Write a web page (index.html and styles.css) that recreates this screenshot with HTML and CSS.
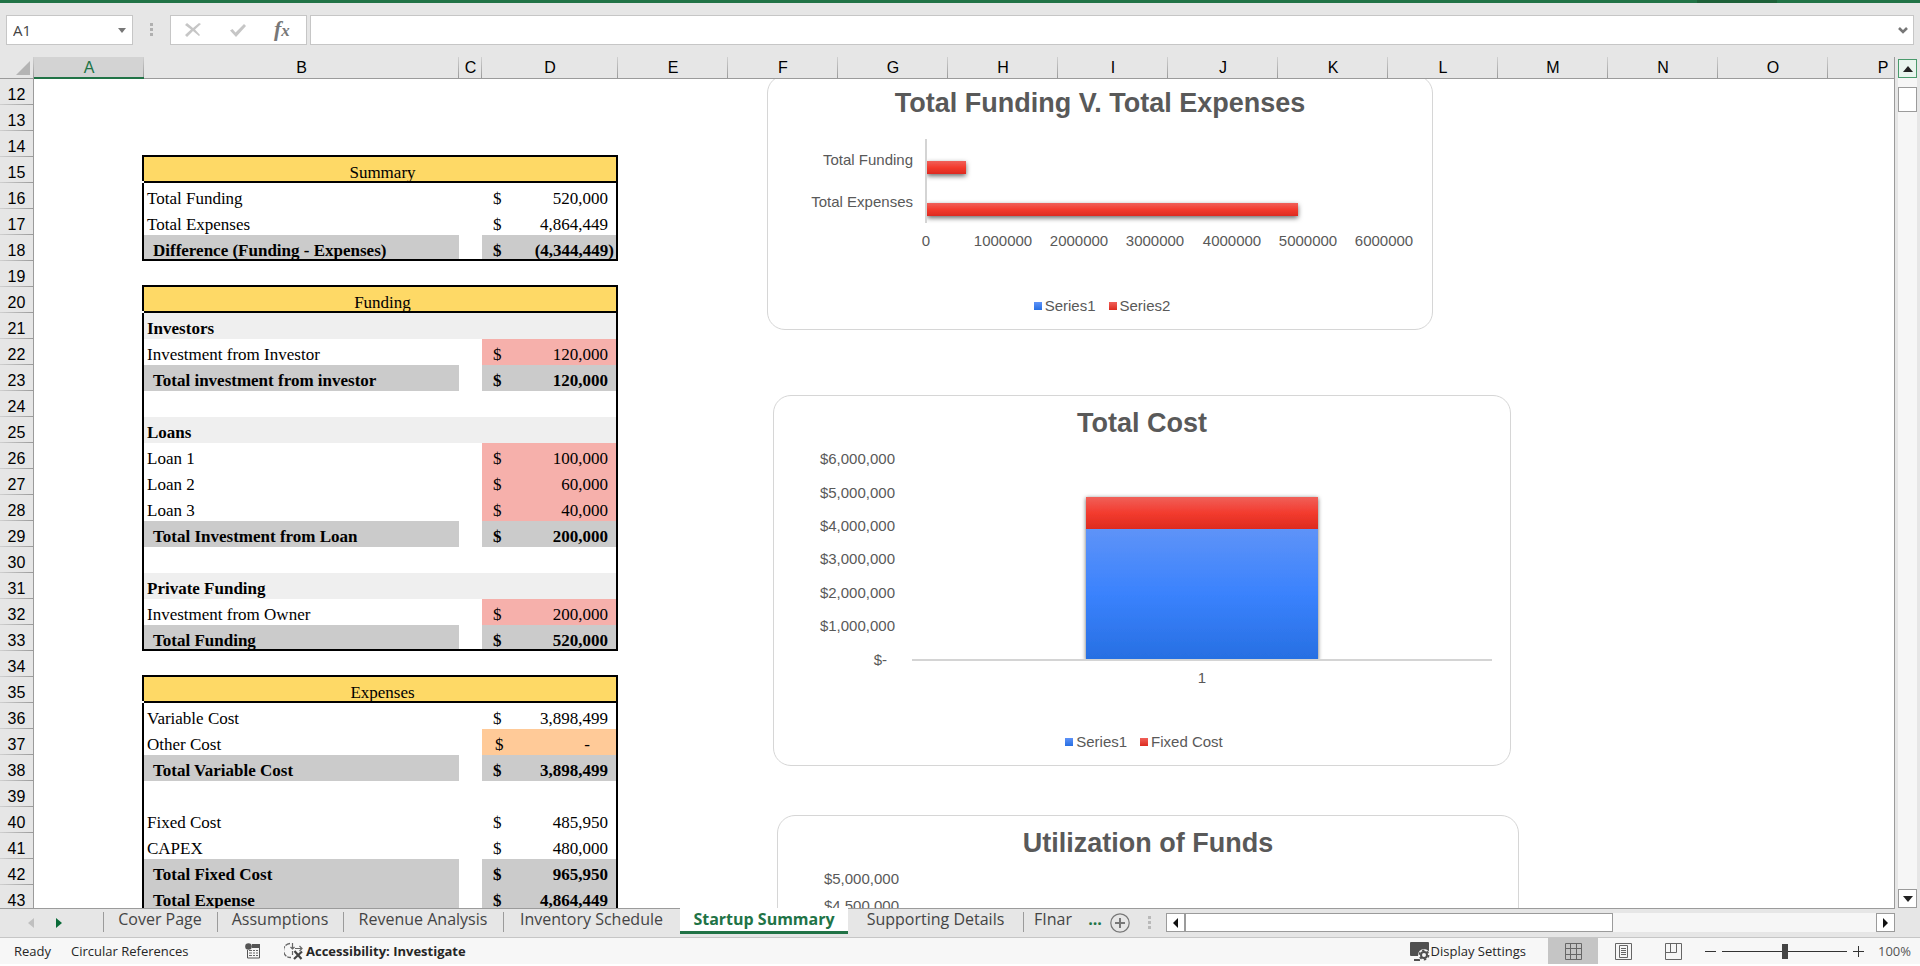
FILE: index.html
```html
<!DOCTYPE html>
<html lang="en">
<head>
<meta charset="utf-8">
<title>Startup Summary</title>
<link rel="stylesheet" href="styles.css">
</head>
<body>
<div class="ribbon-edge"><span class="ribbon-tab"></span></div>
<header class="formula-bar">
  <div class="name-box">
    <input class="name-input" type="text" value="A1" aria-label="Name box">
    <button class="name-arrow" aria-label="Open name list"><svg width="8" height="5" viewBox="0 0 8 5"><path d="M0 0h8L4 5z" fill="#777"/></svg></button>
  </div>
  <svg class="grip" width="4" height="14" viewBox="0 0 4 14"><path d="M0 0h3v3H0zM0 5h3v3H0zM0 10h3v3H0z" fill="#b0b0b0"/></svg>
  <div class="formula-tools">
    <button aria-label="Cancel"><svg width="18" height="16" viewBox="0 0 18 16"><path d="M1 3l2-2 6 5 6-5 2 1-6 5.500 5 5.500-1 1-6-5-6 6-2-2 6-5.500z" fill="#c6c6c6"/></svg></button>
    <button aria-label="Enter"><svg width="18" height="16" viewBox="0 0 18 16"><path d="M1 8.500L3.500 7l3 3.500L15 2l2 2L7 15z" fill="#c6c6c6"/></svg></button>
    <button class="fx" aria-label="Insert function"><span class="fx-f">f</span><span class="fx-x">x</span></button>
  </div>
  <div class="formula-box">
    <input class="formula-input" type="text" aria-label="Formula">
    <button class="formula-arrow" aria-label="Expand formula bar"><svg width="10" height="7" viewBox="0 0 10 7"><path d="M1 1l4 4 4-4" stroke="#777" stroke-width="2.6" fill="none"/></svg></button>
  </div>
</header>

<main class="workspace">
  <div class="sheet">
    <table class="grid">
      <colgroup><col class="c-num"><col class="c-a"><col class="c-b"><col class="c-c"><col class="c-d"><col span="12" class="c-std"></colgroup>
      <thead>
        <tr><th class="corner"><svg width="14" height="14" viewBox="0 0 14 14"><path d="M14 0v14H0z" fill="#b4b4b4"/></svg></th><th class="selected">A</th><th>B</th><th>C</th><th>D</th><th>E</th><th>F</th><th>G</th><th>H</th><th>I</th><th>J</th><th>K</th><th>L</th><th>M</th><th>N</th><th>O</th><th>P</th></tr>
      </thead>
      <tbody>
        <tr><th>12</th><td colspan="16"></td></tr>
        <tr><th>13</th><td colspan="16"></td></tr>
        <tr><th>14</th><td colspan="16"></td></tr>
        <tr class="title"><th>15</th><td></td><td class="head" colspan="3">Summary</td></tr>
        <tr class="line"><th>16</th><td></td><td>Total Funding</td><td></td><td><div class="money"><span>$</span><span>520,000</span></div></td></tr>
        <tr class="line"><th>17</th><td></td><td>Total Expenses</td><td></td><td><div class="money"><span>$</span><span>4,864,449</span></div></td></tr>
        <tr class="line total last"><th>18</th><td></td><td>Difference (Funding - Expenses)</td><td></td><td><div class="money negative"><span>$</span><span>(4,344,449)</span></div></td></tr>
        <tr><th>19</th><td colspan="16"></td></tr>
        <tr class="title"><th>20</th><td></td><td class="head" colspan="3">Funding</td></tr>
        <tr class="line section"><th>21</th><td></td><td>Investors</td><td></td><td></td></tr>
        <tr class="line input"><th>22</th><td></td><td>Investment from Investor</td><td></td><td><div class="money"><span>$</span><span>120,000</span></div></td></tr>
        <tr class="line total"><th>23</th><td></td><td>Total investment from investor</td><td></td><td><div class="money"><span>$</span><span>120,000</span></div></td></tr>
        <tr class="line"><th>24</th><td></td><td></td><td></td><td></td></tr>
        <tr class="line section"><th>25</th><td></td><td>Loans</td><td></td><td></td></tr>
        <tr class="line input"><th>26</th><td></td><td>Loan 1</td><td></td><td><div class="money"><span>$</span><span>100,000</span></div></td></tr>
        <tr class="line input"><th>27</th><td></td><td>Loan 2</td><td></td><td><div class="money"><span>$</span><span>60,000</span></div></td></tr>
        <tr class="line input"><th>28</th><td></td><td>Loan 3</td><td></td><td><div class="money"><span>$</span><span>40,000</span></div></td></tr>
        <tr class="line total"><th>29</th><td></td><td>Total Investment from Loan</td><td></td><td><div class="money"><span>$</span><span>200,000</span></div></td></tr>
        <tr class="line"><th>30</th><td></td><td></td><td></td><td></td></tr>
        <tr class="line section"><th>31</th><td></td><td>Private Funding</td><td></td><td></td></tr>
        <tr class="line input"><th>32</th><td></td><td>Investment from Owner</td><td></td><td><div class="money"><span>$</span><span>200,000</span></div></td></tr>
        <tr class="line total last"><th>33</th><td></td><td>Total Funding</td><td></td><td><div class="money"><span>$</span><span>520,000</span></div></td></tr>
        <tr><th>34</th><td colspan="16"></td></tr>
        <tr class="title"><th>35</th><td></td><td class="head" colspan="3">Expenses</td></tr>
        <tr class="line"><th>36</th><td></td><td>Variable Cost</td><td></td><td><div class="money"><span>$</span><span>3,898,499</span></div></td></tr>
        <tr class="line other"><th>37</th><td></td><td>Other Cost</td><td></td><td><div class="money dash"><span>$</span><span>-</span></div></td></tr>
        <tr class="line total"><th>38</th><td></td><td>Total Variable Cost</td><td></td><td><div class="money"><span>$</span><span>3,898,499</span></div></td></tr>
        <tr class="line"><th>39</th><td></td><td></td><td></td><td></td></tr>
        <tr class="line"><th>40</th><td></td><td>Fixed Cost</td><td></td><td><div class="money"><span>$</span><span>485,950</span></div></td></tr>
        <tr class="line"><th>41</th><td></td><td>CAPEX</td><td></td><td><div class="money"><span>$</span><span>480,000</span></div></td></tr>
        <tr class="line total"><th>42</th><td></td><td>Total Fixed Cost</td><td></td><td><div class="money"><span>$</span><span>965,950</span></div></td></tr>
        <tr class="line total"><th>43</th><td></td><td>Total Expense</td><td></td><td><div class="money"><span>$</span><span>4,864,449</span></div></td></tr>
      </tbody>
    </table>

    <div class="charts">
      <svg width="0" height="0" class="defs" aria-hidden="true">
        <defs>
          <linearGradient id="red" x1="0" y1="0" x2="0" y2="1"><stop offset="0" stop-color="#f06059"/><stop offset=".5" stop-color="#f33b2e"/><stop offset="1" stop-color="#dd2b1f"/></linearGradient>
          <linearGradient id="blue" x1="0" y1="0" x2="0" y2="1"><stop offset="0" stop-color="#5e93f8"/><stop offset=".5" stop-color="#3a82fd"/><stop offset="1" stop-color="#276fe2"/></linearGradient>
          <filter id="shadow" x="-20%" y="-60%" width="140%" height="260%"><feDropShadow dx="0" dy="2" stdDeviation="2.5" flood-color="#000" flood-opacity=".6"/></filter>
          <filter id="shadow-wide" x="-10%" y="-10%" width="120%" height="120%"><feDropShadow dx="0" dy="1" stdDeviation="2" flood-color="#000" flood-opacity=".6"/></filter>
          <clipPath id="right-of-axis"><rect x="159" y="0" width="500" height="177"/></clipPath>
          <clipPath id="above-axis"><rect x="0" y="0" width="736" height="220"/></clipPath>
        </defs>
      </svg>
      <figure class="chart chart-compare">
        <h2>Total Funding V. Total Expenses</h2>
        <svg class="plot" width="664" height="177" viewBox="0 0 664 177">
          <g clip-path="url(#right-of-axis)">
            <rect x="159" y="42" width="39" height="13" fill="url(#red)" filter="url(#shadow)"/>
            <rect x="159" y="84" width="371" height="13" fill="url(#red)" filter="url(#shadow)"/>
          </g>
          <path d="M158 20v84" stroke="#d4d4d4" stroke-width="2"/>
          <g text-anchor="end"><text x="145" y="46">Total Funding</text><text x="145" y="88">Total Expenses</text></g>
          <g text-anchor="middle"><text x="158" y="127">0</text><text x="235" y="127">1000000</text><text x="311" y="127">2000000</text><text x="387" y="127">3000000</text><text x="464" y="127">4000000</text><text x="540" y="127">5000000</text><text x="616" y="127">6000000</text></g>
        </svg>
        <ul class="legend"><li><i class="key blue"></i>Series1</li><li><i class="key red"></i>Series2</li></ul>
      </figure>
      <figure class="chart chart-cost">
        <h2>Total Cost</h2>
        <svg class="plot" width="736" height="293" viewBox="0 0 736 293">
          <g clip-path="url(#above-axis)"><g filter="url(#shadow-wide)">
            <rect x="312" y="58" width="232" height="32" fill="url(#red)"/>
            <rect x="312" y="90" width="232" height="131" fill="url(#blue)"/>
          </g></g>
          <path d="M138 221h580" stroke="#d4d4d4" stroke-width="2"/>
          <g text-anchor="end"><text x="121" y="25">$6,000,000</text><text x="121" y="59">$5,000,000</text><text x="121" y="92">$4,000,000</text><text x="121" y="125">$3,000,000</text><text x="121" y="159">$2,000,000</text><text x="121" y="192">$1,000,000</text><text x="113" y="226">$-</text></g>
          <text x="428" y="244" text-anchor="middle">1</text>
        </svg>
        <ul class="legend"><li><i class="key blue"></i>Series1</li><li><i class="key red"></i>Fixed Cost</li></ul>
      </figure>
      <figure class="chart chart-funds">
        <h2>Utilization of Funds</h2>
        <svg class="plot" width="740" height="293" viewBox="0 0 740 293">
          <g text-anchor="end"><text x="121" y="25">$5,000,000</text><text x="121" y="52">$4,500,000</text></g>
        </svg>
      </figure>
    </div>
  </div>
  <div class="vscroll">
    <button class="scroll-btn hot" aria-label="Scroll up"><svg width="10" height="6" viewBox="0 0 10 6"><path d="M0 6h10L5 0z" fill="#222"/></svg></button>
    <div class="vtrack"><div class="vthumb"></div></div>
    <button class="scroll-btn" aria-label="Scroll down"><svg width="10" height="6" viewBox="0 0 10 6"><path d="M0 0h10L5 6z" fill="#222"/></svg></button>
  </div>
</main>

<nav class="tab-bar">
  <div class="tab-nav">
    <button aria-label="Previous sheet"><svg width="6" height="10" viewBox="0 0 6 10"><path d="M6 0v10L0 5z" fill="#c0c0c0"/></svg></button>
    <button aria-label="Next sheet"><svg width="6" height="10" viewBox="0 0 6 10"><path d="M0 0v10l6-5z" fill="#0a6b38"/></svg></button>
  </div>
  <div class="tabs">
    <button class="tab t1">Cover Page</button>
    <button class="tab t2">Assumptions</button>
    <button class="tab t3">Revenue Analysis</button>
    <button class="tab t4">Inventory Schedule</button>
    <button class="tab t5 active">Startup Summary</button>
    <button class="tab t6">Supporting Details</button>
    <button class="tab t7">FInar</button>
    <button class="more" aria-label="More sheets">...</button>
  </div>
  <button class="add" aria-label="New sheet"><svg width="20" height="20" viewBox="0 0 20 20"><circle cx="10" cy="10" r="9.2" fill="none" stroke="#777" stroke-width="1.2"/><path d="M10 5v10M5 10h10" stroke="#777" stroke-width="2"/></svg></button>
  <svg class="tab-grip" width="4" height="14" viewBox="0 0 4 14"><path d="M0 0h3v3H0zM0 5h3v3H0zM0 10h3v3H0z" fill="#b9b9b9"/></svg>
  <div class="hscroll">
    <button class="scroll-btn" aria-label="Scroll left"><svg width="5" height="10" viewBox="0 0 5 10"><path d="M5 0v10L0 5z" fill="#111"/></svg></button>
    <div class="htrack"><div class="hthumb"></div></div>
    <button class="scroll-btn" aria-label="Scroll right"><svg width="5" height="10" viewBox="0 0 5 10"><path d="M0 0v10l5-5z" fill="#111"/></svg></button>
  </div>
</nav>

<footer class="status">
  <span class="ready">Ready</span>
  <span class="circular">Circular References</span>
  <svg class="macro" width="16" height="16" viewBox="0 0 16 16"><path d="M14.500 1v14h-12V7" fill="none" stroke="#555"/><path d="M7 1h8v4H7z" fill="#555"/><circle cx="3.500" cy="3.500" r="3.300" fill="#555"/><path d="M4 7.500h3m1 0h2m1 0h2M4 10h3m1 0h2m1 0h2M4 12.500h3m1 0h2m1 0h2" stroke="#666"/></svg>
  <svg class="access" width="20" height="18" viewBox="0 0 20 18"><path d="M6 1.500A7 7 0 0 0 7 15.500" fill="none" stroke="#666" stroke-width="1.300" stroke-dasharray="5 1"/><path d="M8.500 1v6M6.500 5l2 2 2-2M11 6.500h7M15.500 4l2.500 2.500L15.500 9M8.500 9v4" fill="none" stroke="#666" stroke-width="1.200"/><path d="M10.500 9l7 8M18 9.500l-8 7.500" stroke="#444" stroke-width="2.200"/></svg>
  <span class="access-text">Accessibility: Investigate</span>
  <div class="status-right">
    <button class="display"><svg width="20" height="19" viewBox="0 0 20 19"><path d="M1 0h17q1 0 1 1v13H1q-1 0-1-1V1q0-1 1-1zM4 17h6v2H4z" fill="#505050"/><circle cx="14" cy="13" r="6" fill="#f7f7f7"/><circle cx="14" cy="13" r="3" fill="none" stroke="#505050" stroke-width="2"/><circle cx="14" cy="13" r="4.600" fill="none" stroke="#505050" stroke-width="1.600" stroke-dasharray="2.400 2.400"/></svg><span>Display Settings</span></button>
    <button class="view on" aria-label="Normal view"><svg width="17" height="17" viewBox="0 0 17 17"><path d="M.5.5h16v16H.5zM.5 5.500h16M.5 11.500h16M5.500.5v16M11.500.5v16" fill="none" stroke="#666"/></svg></button>
    <button class="view" aria-label="Page layout view"><svg width="17" height="17" viewBox="0 0 17 17"><path d="M.5.5h16v16H.5zM4.500 2.500h8v12h-8zM6 5.500h5M6 7.500h5M6 9.500h5M6 11.500h5" fill="none" stroke="#666"/></svg></button>
    <button class="view" aria-label="Page break view"><svg width="17" height="17" viewBox="0 0 17 17"><path d="M.5.5h16v16H.5zM5.500.5v9M.5 9.500h11V.5" fill="none" stroke="#666"/></svg></button>
    <button class="zoom-btn" aria-label="Zoom out"><svg width="11" height="11" viewBox="0 0 11 11"><path d="M0 5.500h11" stroke="#333"/></svg></button>
    <input class="zoom" type="range" min="0" max="100" value="50" aria-label="Zoom">
    <button class="zoom-btn" aria-label="Zoom in"><svg width="11" height="11" viewBox="0 0 11 11"><path d="M0 5.500h11M5.500 0v11" stroke="#333"/></svg></button>
    <span class="percent">100%</span>
  </div>
</footer>
</body>
</html>
```
FILE: styles.css
```css
* { box-sizing: border-box; }

body {
  margin: 0;
  height: 100vh;
  padding-bottom: 2px;
  display: flex;
  flex-direction: column;
  overflow: hidden;
  background: #fff;
  font-family: "Open Sans", "Noto Sans", sans-serif;
  color: #262626;
}

button {
  display: flex;
  align-items: center;
  justify-content: center;
  margin: 0;
  padding: 0;
  border: 0;
  background: none;
  font: inherit;
  color: inherit;
}

svg { display: block; flex: none; }

/* Formula bar */
.ribbon-edge { flex: none; height: 3px; padding-right: 143px; display: flex; justify-content: flex-end; background: #217346; }
.ribbon-tab { width: 80px; background: #1e6139; }

.formula-bar {
  flex: none;
  display: flex;
  align-items: center;
  height: 54px;
  padding: 0 6px;
  background: #e6e6e6;
}

.name-box, .formula-tools, .formula-box {
  display: flex;
  align-items: center;
  height: 30px;
  border: 1px solid #c6c6c6;
  background: #fff;
}

.name-box { width: 127px; padding: 0 6px; }
.name-input, .formula-input { flex: 1; min-width: 0; border: 0; padding: 0; outline: 0; background: none; font: 15px "Open Sans", sans-serif; color: #444; }
.grip { margin: 0 16px 0 17px; }
.formula-tools { width: 137px; gap: 27px; padding-left: 13px; margin-right: 3px; }
.fx { align-items: baseline; font: italic bold 22px/26px "Liberation Serif", serif; color: #777; }
.fx-f { font-size: 22px; }
.fx-x { font-size: 17px; }
.formula-box { flex: 1; padding: 0 5px; }

/* Worksheet */
.workspace { flex: 1; min-height: 0; display: flex; background: #e6e6e6; }
.sheet { position: relative; flex: 1; min-width: 0; overflow: hidden; background: #fff; border-right: 1px solid #9b9b9b; }

.grid { width: 1938px; table-layout: fixed; border-collapse: separate; border-spacing: 0; font: 17px/20px "Liberation Serif", serif; color: #000; }
.c-num { width: 34px; }
.c-a { width: 110px; }
.c-b { width: 315px; }
.c-c { width: 23px; }
.c-d { width: 136px; }
.c-std { width: 110px; }

.grid th { padding: 0; font: 16px/20px "Liberation Sans", sans-serif; text-align: center; }
.grid thead th {
  height: 22px;
  padding-top: 1px;
  border-bottom: 1px solid #9b9b9b;
  background: linear-gradient(#d0d0d0, #9b9b9b) right / 1px 100% no-repeat #e6e6e6;
}
.grid thead .selected { color: #217346; background-color: #d3d3d3; border-bottom: 2px solid #217346; line-height: 19px; }
.corner svg { margin-left: 16px; }
.grid tbody tr { height: 26px; }
.grid tbody th { padding-top: 5px; border-right: 1px solid #9b9b9b; background: linear-gradient(90deg, #d0d0d0, #9b9b9b) bottom / 100% 1px no-repeat #e6e6e6; }
.grid td { padding: 6px 0 0 3px; white-space: nowrap; }

.head { text-align: center; background: #fed966; box-shadow: -2px -2px #000, 0 -2px #000, inset -2px -2px #000; }
.line td:nth-child(3) { box-shadow: -2px 0 #000; }
.line td:nth-child(5) { box-shadow: inset -2px 0 #000; padding-left: 0; }
.last td:nth-child(3) { box-shadow: -2px 0 #000, inset 0 -2px #000; }
.last td:nth-child(4) { box-shadow: inset 0 -2px #000; }
.last td:nth-child(5) { box-shadow: inset -2px -2px #000; }
.section td:nth-child(n+3) { background: #efefef; font-weight: bold; }
.total td:nth-child(3), .total td:nth-child(5) { background: #cbcbcb; font-weight: bold; }
.total td:nth-child(3) { padding-left: 9px; }
.input td:nth-child(5) { background: #f6b0ab; }
.other td:nth-child(5) { background: #ffca98; }

.money { display: flex; justify-content: space-between; padding: 0 10px 0 11px; }
.negative { padding-right: 4px; }
.dash { padding-left: 13px; padding-right: 28px; }

/* Charts float over the cells */
.charts { position: absolute; top: 22px; right: 0; bottom: 0; left: 0; overflow: hidden; }
.defs { position: absolute; }
.chart {
  position: absolute;
  margin: 0;
  padding-top: 12px;
  border: 1px solid #d6d6d6;
  border-radius: 18px;
  background: #fff;
  font: 15px/20px "Liberation Sans", sans-serif;
  color: #595959;
}
.chart-compare { left: 767px; top: -4px; width: 666px; height: 255px; }
.chart-cost { left: 773px; top: 316px; width: 738px; height: 371px; }
.chart-funds { left: 777px; top: 736px; width: 742px; height: 371px; }
.chart h2 { margin: 0; font-size: 27px; line-height: 31px; text-align: center; }
.plot { fill: #595959; }
.legend { display: flex; justify-content: center; gap: 13px; margin: 0; padding: 0 0 0 4px; list-style: none; }
.legend li { display: flex; align-items: center; gap: 3px; }
.key { width: 8px; height: 8px; }
.key.blue { background: linear-gradient(#5e93f8, #276fe2); }
.key.red { background: linear-gradient(#f06059, #dd2b1f); }

/* Scroll bars */
.scroll-btn { width: 19px; height: 19px; border: 1px solid #9b9b9b; background: #fff; }
.scroll-btn.hot { border-color: #4a9a6c; background: #e9f5ee; }
.vscroll { display: flex; flex-direction: column; width: 25px; padding: 2px 3px 0; }
.vtrack { flex: 1; padding-top: 9px; background: #f6f6f6; }
.vthumb { height: 25px; border: 1px solid #9b9b9b; background: #fff; }

/* Sheet tabs */
.tab-bar {
  flex: none;
  display: flex;
  align-items: flex-start;
  height: 30px;
  padding-right: 25px;
  border-bottom: 1px solid #c6c6c6;
  background: linear-gradient(#9b9b9b, #9b9b9b) left top / calc(100% - 25px) 1px no-repeat #e6e6e6;
}
.tab-nav { display: flex; gap: 22px; width: 103px; height: 30px; padding-left: 28px; }
.tabs { display: flex; height: 26px; }
.tab, .more { padding-bottom: 4px; font-size: 16px; line-height: 22px; color: #444; white-space: nowrap; }
.tab { background: linear-gradient(#9b9b9b, #9b9b9b) left bottom 2px / 1px 20px no-repeat; }
.t1 { width: 114px; }
.t2 { width: 126px; }
.t3 { width: 160px; }
.t4 { width: 177px; }
.t5 { width: 168px; }
.t6 { width: 175px; }
.t7 { width: 60px; }
.tab.active { border-bottom: 3px solid #217346; padding-bottom: 1px; background: #fff; color: #217346; font-weight: bold; }
.t6 { background: none; }
.more { width: 24px; font-weight: bold; color: #217346; }
.add { height: 30px; width: 26px; }
.tab-grip { margin: 8px 14px 0 15px; }
.hscroll { flex: 1; display: flex; margin-top: 5px; }
.htrack { flex: 1; background: #f6f6f6; }
.hthumb { width: 62%; height: 19px; border: 1px solid #9b9b9b; background: #fff; }

/* Status bar */
.status { flex: none; display: flex; align-items: center; height: 26px; padding-left: 14px; background: #f7f7f7; font-size: 13px; line-height: 18px; white-space: nowrap; }
.ready { width: 57px; }
.circular { width: 174px; }
.access { margin: 0 2px 0 23px; }
.access-text { font-weight: bold; }
.status-right { display: flex; align-items: center; height: 26px; margin-left: auto; padding-right: 9px; }
.display { gap: 1px; margin-right: 22px; }
.view { width: 50px; height: 26px; }
.view.on { background: #c5c5c5; }
.zoom-btn { width: 17px; height: 17px; }
.view + .zoom-btn { margin-left: 4px; }
.zoom { width: 125px; height: 16px; margin: 0 3px; appearance: none; background: linear-gradient(#333, #333) center / 100% 1px no-repeat; }
.zoom::-webkit-slider-thumb { appearance: none; width: 6px; height: 15px; background: #444; }
.percent { width: 44px; text-align: right; color: #555; }
```
